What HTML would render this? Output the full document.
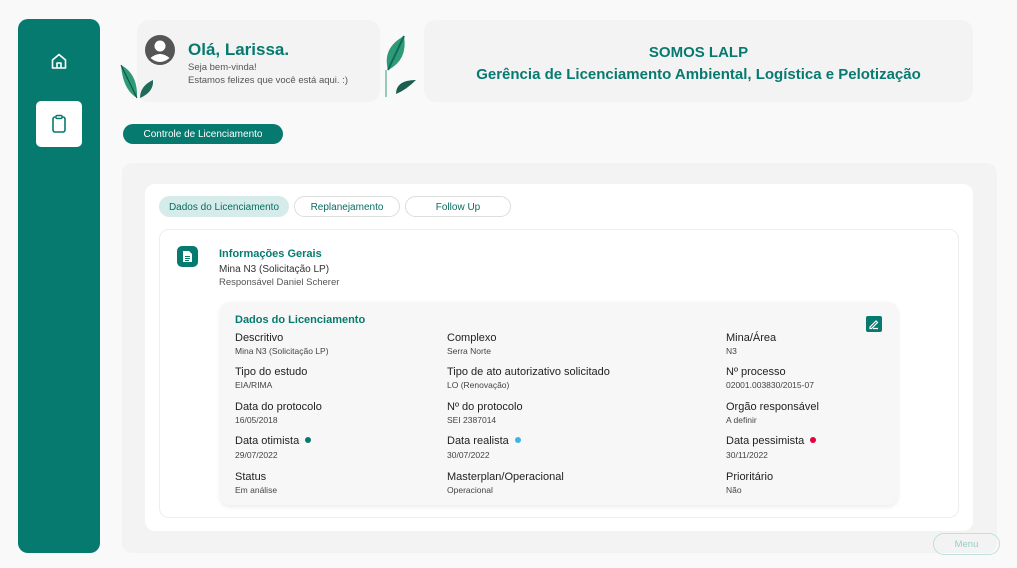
<!DOCTYPE html>
<html><head><meta charset="utf-8"><style>
*{margin:0;padding:0;box-sizing:border-box}
body{width:1017px;height:568px;background:#f9f9f9;font-family:"Liberation Sans",sans-serif;position:relative;overflow:hidden;color:#333}
.abs{position:absolute}
.teal{color:#077a70}
.lbl{position:absolute;font-size:11px;color:#222}
.val{position:absolute;font-size:8.5px;color:#444}
.dot{display:inline-block;width:6px;height:6px;border-radius:50%;margin-left:6px;vertical-align:1px}
.pill{display:flex;align-items:center;justify-content:center;padding-top:1px}
</style></head><body>
<div class="abs" style="left:18px;top:19px;width:82px;height:534px;background:#077a70;border-radius:10px"></div>
<svg class="abs" style="left:50px;top:52px" width="18" height="18" viewBox="0 0 18 18"><path d="M2.5 8 L9 2.5 L15.5 8 V16 H2.5 Z M7 16 V11 H11 V16" fill="none" stroke="#fff" stroke-width="1.6" stroke-linejoin="round"/></svg>
<div class="abs" style="left:36px;top:101px;width:46px;height:46px;background:#fff;border-radius:5px"></div>
<svg class="abs" style="left:50px;top:114px" width="18" height="20" viewBox="0 0 18 20"><rect x="3" y="3" width="12" height="15" rx="2" fill="none" stroke="#077a70" stroke-width="1.6"/><rect x="6" y="1.5" width="6" height="3" rx="1" fill="#fff" stroke="#077a70" stroke-width="1.4"/></svg>

<div class="abs" style="left:137px;top:20px;width:243px;height:82px;background:#f3f3f3;border-radius:12px"></div>
<svg class="abs" style="left:144px;top:34px" width="32" height="32" viewBox="0 0 32 32"><circle cx="16" cy="16" r="15" fill="#555"/><circle cx="16" cy="12" r="5.5" fill="#fff"/><path d="M6.5 24 Q16 16 25.5 24 Q16 32 6.5 24Z" fill="#fff"/></svg>
<div class="abs teal" style="left:188px;top:40px;font-size:17px;font-weight:bold">Olá, Larissa.</div>
<div class="abs" style="left:188px;top:62px;font-size:9.5px;color:#555;line-height:12.5px">Seja bem-vinda!<br>Estamos felizes que você está aqui. :)</div>
<svg class="abs" style="left:118px;top:62px" width="40" height="40" viewBox="0 0 40 40"><path d="M3 3 Q20 12 19 36 Q5 28 3 3Z" fill="#2e9a78"/><path d="M3 3 L19 36" stroke="#0b4a40" stroke-width="1"/><path d="M35 18 Q36 30 22 36 Q22 24 35 18Z" fill="#1d6b58"/></svg>
<svg class="abs" style="left:378px;top:34px" width="40" height="64" viewBox="0 0 40 64"><path d="M26 2 Q30 26 10 36 Q4 14 26 2Z" fill="#2e9a78"/><path d="M26 2 L10 36" stroke="#0d6b5c" stroke-width="2"/><path d="M8 36 V63" stroke="#2e9a78" stroke-width="1"/><path d="M38 46 Q28 56 18 60 Q18 46 38 46Z" fill="#1b5e4f"/></svg>

<div class="abs" style="left:424px;top:20px;width:549px;height:82px;background:#f3f3f3;border-radius:12px"></div>
<div class="abs teal" style="left:424px;top:42px;width:549px;text-align:center;font-size:15px;font-weight:bold;line-height:22px">SOMOS LALP<br>Gerência de Licenciamento Ambiental, Logística e Pelotização</div>

<div class="abs pill" style="left:123px;top:124px;width:160px;height:20px;background:#077a70;border-radius:10px;color:#fff;font-size:10px">Controle de Licenciamento</div>

<div class="abs" style="left:122px;top:163px;width:875px;height:390px;background:#f3f3f3;border-radius:10px"></div>
<div class="abs" style="left:145px;top:184px;width:828px;height:347px;background:#fff;border-radius:10px"></div>
<div class="abs pill" style="left:159px;top:196px;width:130px;height:21px;background:#d5ecea;border-radius:11px;font-size:10px;color:#0b6b62">Dados do Licenciamento</div>
<div class="abs pill" style="left:294px;top:196px;width:106px;height:21px;border:1px solid #ddd;border-radius:11px;font-size:10px;color:#0b6b62">Replanejamento</div>
<div class="abs pill" style="left:405px;top:196px;width:106px;height:21px;border:1px solid #ddd;border-radius:11px;font-size:10px;color:#0b6b62">Follow Up</div>

<div class="abs" style="left:159px;top:229px;width:800px;height:289px;border:1px solid #eee;border-radius:10px;background:#fff"></div>
<div class="abs" style="left:177px;top:246px;width:21px;height:21px;background:#077a70;border-radius:5px"></div>
<svg class="abs" style="left:182px;top:250px" width="11" height="13" viewBox="0 0 11 13"><path d="M1 1 H7 L10 4 V12 H1Z" fill="#fff"/><path d="M3 6.5H8M3 8.5H8M3 10.5H7" stroke="#077a70" stroke-width="1"/></svg>
<div class="abs teal" style="left:219px;top:248px;font-size:11px;font-weight:bold">Informações Gerais</div>
<div class="abs" style="left:219px;top:264px;font-size:10px;color:#333">Mina N3 (Solicitação LP)</div>
<div class="abs" style="left:219px;top:277px;font-size:9.5px;color:#555">Responsável Daniel Scherer</div>

<div class="abs" style="left:220px;top:302px;width:678px;height:203px;background:#f7f7f7;border-radius:10px;box-shadow:0 2px 5px rgba(0,0,0,.08)"></div>
<div class="abs teal" style="left:235px;top:314px;font-size:11px;font-weight:bold">Dados do Licenciamento</div>
<div class="abs" style="left:866px;top:316px;width:16px;height:16px;background:#077a70;border-radius:2px"></div>
<svg class="abs" style="left:868px;top:318px" width="12" height="12" viewBox="0 0 12 12"><path d="M2 9 L8 3 L9.5 4.5 L3.5 10.5 H2Z M5 10.5 H10" fill="none" stroke="#fff" stroke-width="1.2"/></svg>

<div class="lbl" style="left:235px;top:332px">Descritivo</div><div class="val" style="left:235px;top:346px">Mina N3 (Solicitação LP)</div>
<div class="lbl" style="left:447px;top:332px">Complexo</div><div class="val" style="left:447px;top:346px">Serra Norte</div>
<div class="lbl" style="left:726px;top:332px">Mina/Área</div><div class="val" style="left:726px;top:346px">N3</div>

<div class="lbl" style="left:235px;top:366px">Tipo do estudo</div><div class="val" style="left:235px;top:380px">EIA/RIMA</div>
<div class="lbl" style="left:447px;top:366px">Tipo de ato autorizativo solicitado</div><div class="val" style="left:447px;top:380px">LO (Renovação)</div>
<div class="lbl" style="left:726px;top:366px">Nº processo</div><div class="val" style="left:726px;top:380px">02001.003830/2015-07</div>

<div class="lbl" style="left:235px;top:401px">Data do protocolo</div><div class="val" style="left:235px;top:415px">16/05/2018</div>
<div class="lbl" style="left:447px;top:401px">Nº do protocolo</div><div class="val" style="left:447px;top:415px">SEI 2387014</div>
<div class="lbl" style="left:726px;top:401px">Orgão responsável</div><div class="val" style="left:726px;top:415px">A definir</div>

<div class="lbl" style="left:235px;top:435px">Data otimista<span class="dot" style="background:#077a70"></span></div><div class="val" style="left:235px;top:450px">29/07/2022</div>
<div class="lbl" style="left:447px;top:435px">Data realista<span class="dot" style="background:#3bb5e3"></span></div><div class="val" style="left:447px;top:450px">30/07/2022</div>
<div class="lbl" style="left:726px;top:435px">Data pessimista<span class="dot" style="background:#e8003c"></span></div><div class="val" style="left:726px;top:450px">30/11/2022</div>

<div class="lbl" style="left:235px;top:471px">Status</div><div class="val" style="left:235px;top:485px">Em análise</div>
<div class="lbl" style="left:447px;top:471px">Masterplan/Operacional</div><div class="val" style="left:447px;top:485px">Operacional</div>
<div class="lbl" style="left:726px;top:471px">Prioritário</div><div class="val" style="left:726px;top:485px">Não</div>

<div class="abs pill" style="left:933px;top:533px;width:67px;height:22px;border:1px solid #bfe0dc;border-radius:11px;font-size:9.5px;color:#9cccc6">Menu</div>
</body></html>
